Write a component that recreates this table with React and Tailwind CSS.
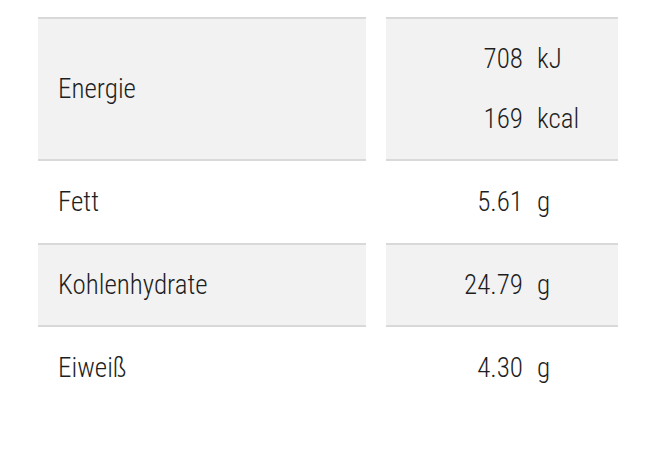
export default function App() {
  const rows = [
    { label: "Energie", values: [["708", "kJ"], ["169", "kcal"]], shaded: true, h: "h-[142px]" },
    { label: "Fett", values: [["5.61", "g"]], shaded: false, h: "h-[84px]" },
    { label: "Kohlenhydrate", values: [["24.79", "g"]], shaded: true, h: "h-[82px]" },
    { label: "Eiweiß", values: [["4.30", "g"]], shaded: false, h: "h-[84px]" },
  ];
  return (
    <div
      className="w-[664px] h-[451px] bg-white pt-[17px] pl-[38px] text-[#1e1e1e] text-[27px] font-light"
      style={{ fontFamily: "'Roboto Condensed', Roboto, 'Liberation Sans', sans-serif", fontStretch: "condensed" }}
    >
      <div className="grid grid-cols-[328px_232px] gap-x-5">
        <div className="border-t-2 border-[#d9d9d9]" />
        <div className="border-t-2 border-[#d9d9d9]" />
        {rows.map((r, i) => (
          <>
            <div
              key={"l" + i}
              className={`${r.h} flex items-center pl-5 border-b-2 ${i === rows.length - 1 ? "border-transparent" : "border-[#d9d9d9]"} ${r.shaded ? "bg-[#f2f2f2]" : "bg-white"}`}
            >
              {r.label}
            </div>
            <div
              key={"r" + i}
              className={`${r.h} flex flex-col justify-center border-b-2 ${i === rows.length - 1 ? "border-transparent" : "border-[#d9d9d9]"} ${r.shaded ? "bg-[#f2f2f2]" : "bg-white"}`}
            >
              {r.values.map(([n, u], j) => (
                <div key={j} className="flex h-[60px] items-center">
                  <span className="w-[137px] text-right">{n}</span>
                  <span className="pl-[14px]">{u}</span>
                </div>
              ))}
            </div>
          </>
        ))}
      </div>
    </div>
  );
}
